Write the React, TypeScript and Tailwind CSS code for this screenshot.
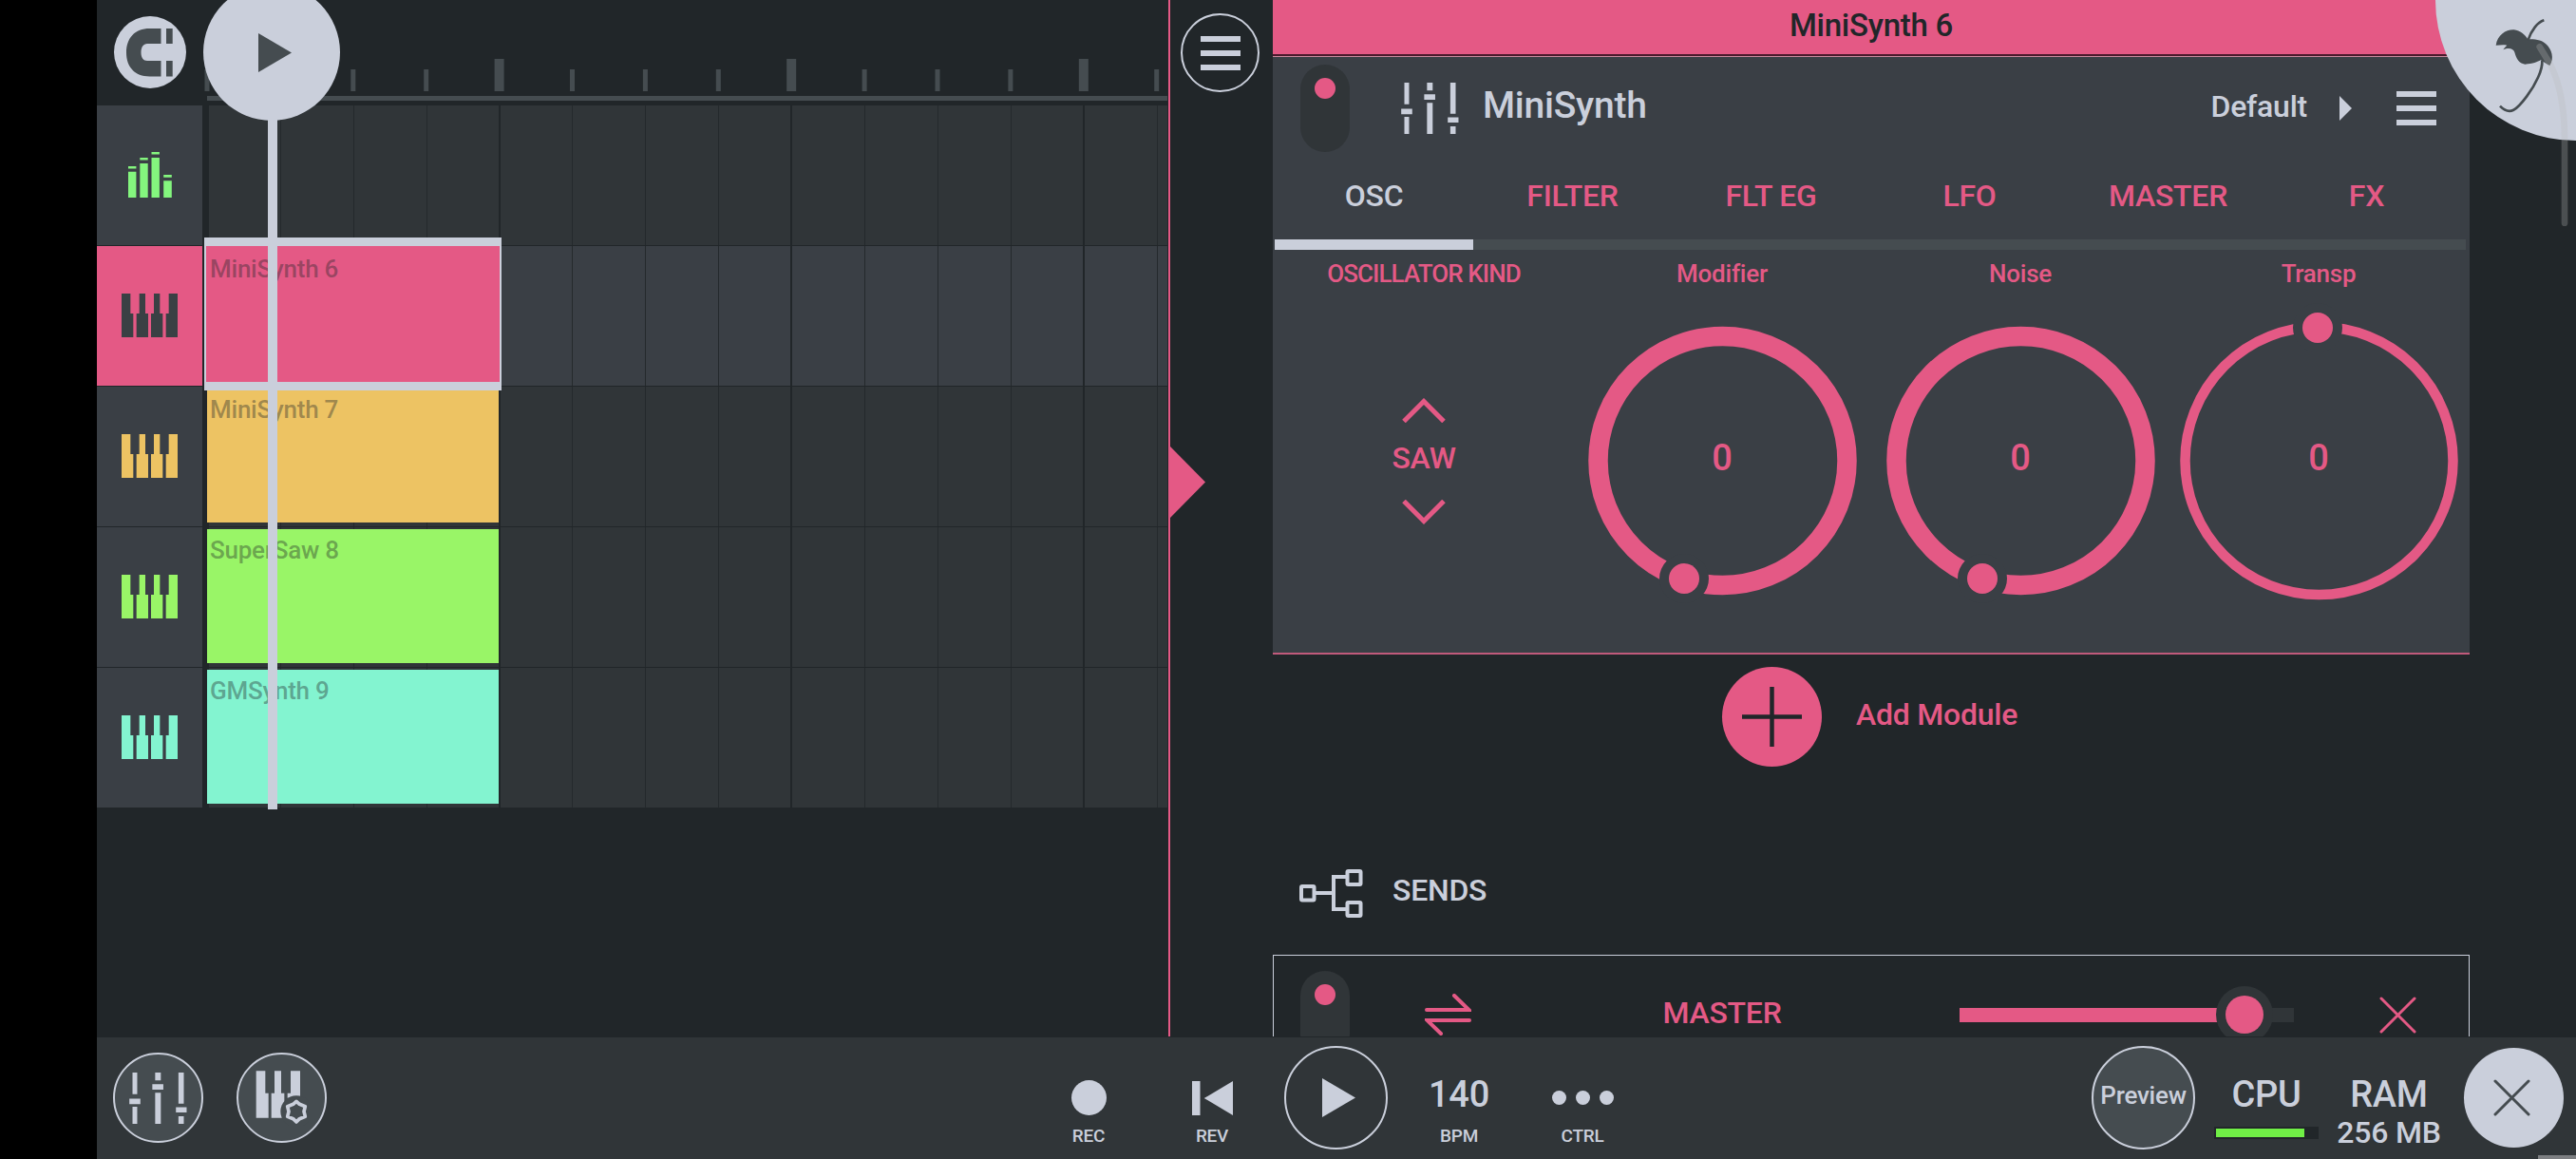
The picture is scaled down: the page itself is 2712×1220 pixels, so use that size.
import type { ReactNode } from "react";

const tracks = [
  { kind: "drums", color: "#84f67e", clip: "" },
  { kind: "keys", color: "#e45985", clip: "MiniSynth 6", selected: true },
  { kind: "keys", color: "#edc363", clip: "MiniSynth 7" },
  { kind: "keys", color: "#99f567", clip: "SuperSaw 8" },
  { kind: "keys", color: "#83f4d0", clip: "GMSynth 9" },
];

const tabs = ["OSC", "FILTER", "FLT EG", "LFO", "MASTER", "FX"];

const knobs = [
  { label: "Modifier", r: 131, width: 20.5, dotX: 110, dotY: 274 },
  { label: "Noise", r: 131, width: 20.5, dotX: 110, dotY: 274 },
  { label: "Transp", r: 141, width: 10.5, dotX: 149, dotY: 10 },
];

const beats = Array.from({ length: 14 }, (_, i) => i);

const KeysIcon = ({ color }: { color: string }) => (
  <svg className="w-[59px] h-[46px]" viewBox="0 0 177 138" fill={color}>
    <path d="M0 0h28v63h9v75H0zM56 0h19v63h9v75H47V63h9zM102 0h19v63h9v75H93V63h9zM149 0h28v138h-37V63h9z" />
  </svg>
);

const DrumsIcon = ({ color }: { color: string }) => (
  <svg className="w-[46px] h-[48px]" viewBox="0 0 46 48" fill={color}>
    <path d="M0 15h8.4v2.6H0zM0 20.7h8.4V48H0zM12.3 6h8.4v2.6h-8.4zM12.3 12h8.4v36h-8.4zM24.5 0h8.4v2.4h-8.4zM24.5 6h8.4v42h-8.4zM37.2 24h8.6v2.7h-8.6zM37.2 30.3h8.6V48h-8.6z" />
  </svg>
);

const MixerIcon = () => (
  <svg className="w-[61px] h-[54px]" viewBox="137 173 183 163" fill="#cacfdb">
    <path d="M147 173h15v69h-15zM137 256h35v17h-35zM147 282h15v54h-15zM219 173h18v25h-18zM210 210h35v17h-35zM219 237h18v99h-18zM293 173h17v99h-17zM285 283h34v17h-34zM293 312h17v24h-17z" />
  </svg>
);

const KeysGearIcon = () => (
  <svg className="w-[56px] h-[58px]" viewBox="541 172 168 174">
    <path
      d="M543 173h29v70h10v78h-39zM601 173h21v70h10v78h-41v-78h10zM652 173h30v85h-40v-15h10z"
      fill="#cacfdb"
    />
    <circle cx="670" cy="301" r="50" fill="#454c50" />
    <path
      d="M670 269l10 9 18 7-4 16 4 16-18 7-10 10-10-10-18-7 4-16-4-16 18-7z"
      fill="none"
      stroke="#cacfdb"
      strokeWidth="11"
      strokeLinejoin="round"
    />
  </svg>
);

const MagnetIcon = () => (
  <svg className="w-[49px] h-[51px]" viewBox="0 0 49 51" fill="#454c50">
    <path d="M36.500 0H24.500C9 0 0 10 0 25.300s9 25.200 24.500 25.200h12V34H22c-4 0-6.500-3-6.500-8.700s2.500-9.300 6.500-9.300h14.500zM42 0h6.700v16H42zM42 34h6.700v16.500H42z" />
  </svg>
);

const Burger = () => (
  <div className="flex flex-col gap-[9px]">
    <div className="w-[42px] h-[6px] bg-[#cacfdb]" />
    <div className="w-[42px] h-[6px] bg-[#cacfdb]" />
    <div className="w-[42px] h-[6px] bg-[#cacfdb]" />
  </div>
);

const PowerToggle = () => (
  <div className="w-[52px] h-[92px] shrink-0 rounded-full bg-[#303538] pt-[14px] flex justify-center">
    <div className="size-[22px] rounded-full bg-[#e45985]" />
  </div>
);

const Ruler = () => (
  <svg className="w-[1016px] h-[111px]" viewBox="213 0 1016 111" fill="#454c50">
    {beats.map((beat) => {
      const big = beat > 0 && beat % 4 === 0;
      const x = 218 + beat * 76.9;
      return (
        <rect
          key={beat}
          x={big ? x - 5 : x - 2.5}
          y={big ? 62 : 73}
          width={big ? 10 : 5}
          height={big ? 34 : 23}
        />
      );
    })}
    <rect x="218" y="101" width="1011" height="5" />
  </svg>
);

const Playlist = () => (
  <section className="relative w-[1128px] shrink-0 overflow-hidden">
    <div className="flex h-[111px]">
      <div className="w-[111px] pt-[17px] flex justify-center items-start">
        <button className="size-[76px] rounded-full bg-[#cacfdb] flex items-center justify-center">
          <MagnetIcon />
        </button>
      </div>
      <Ruler />
    </div>

    {tracks.map((track, index) => (
      <div key={index} className="flex h-[148px]">
        <div
          className="w-[111px] border-b border-[#212629] pb-[2px] flex items-center justify-center"
          style={{ backgroundColor: track.selected ? track.color : "#3a3f45" }}
        >
          {track.kind === "drums" ? (
            <DrumsIcon color={track.color} />
          ) : (
            <KeysIcon color={track.selected ? "#3a4044" : track.color} />
          )}
        </div>
        <div className="relative ml-[5px] w-[1011px]">
          <div
            className={`flex h-full overflow-hidden border-b border-l-2 border-[#212629] ${
              track.selected ? "bg-[#3a3f45]" : "bg-[#303538]"
            }`}
          >
            {beats.map((beat) => (
              <div
                key={beat}
                className={`w-[76.9px] shrink-0 first:w-[75.9px] ${
                  beat % 4 === 3
                    ? "border-r-2 border-[#212629]"
                    : "border-r border-[#24292c]"
                }`}
              />
            ))}
          </div>
          {track.clip && (
            <div
              className={
                track.selected
                  ? "absolute z-10 -left-[3px] -top-[9px] w-[313px] h-[161px] border-x-2 border-y-[9px] border-[#cacfdb] pl-[4px] pt-[8px]"
                  : "absolute left-0 top-[2px] w-[307px] h-[141px] pl-[3px] pt-[6px]"
              }
              style={{ backgroundColor: track.color }}
            >
              <p className="text-[26px] leading-[32px] text-[#212629]/40">
                {track.clip}
              </p>
            </div>
          )}
        </div>
      </div>
    ))}

    {/* playhead */}
    <div className="absolute z-20 left-[180px] top-[100px] w-[10px] h-[752px] bg-[#cacfdb]" />
    <button className="absolute z-20 left-[112px] -top-[17px] size-[144px] rounded-full bg-[#cacfdb]">
      <svg className="ml-[58px] w-[36px] h-[41px]" viewBox="0 0 36 41">
        <path d="M0 0l35 20.500L0 41z" fill="#454c50" />
      </svg>
    </button>
  </section>
);

const Knob = ({ r, width, dotX, dotY }: (typeof knobs)[number]) => (
  <div className="grid place-items-center mt-[32px]">
    <svg
      className="[grid-area:1/1] size-[300px] overflow-visible"
      viewBox="0 0 300 300"
    >
      <circle
        cx="150.500"
        cy="150"
        r={r}
        fill="none"
        stroke="#e45985"
        strokeWidth={width}
      />
      <circle cx={dotX} cy={dotY} r="26" fill="#3a3f45" />
      <circle cx={dotX} cy={dotY} r="16" fill="#e45985" />
    </svg>
    <span className="[grid-area:1/1] mb-[6px] text-[38px] leading-none">0</span>
  </div>
);

const Chevron = ({ d }: { d: string }) => (
  <svg className="w-[46px] h-[26px]" viewBox="0 0 46 26">
    <path d={d} fill="none" stroke="#e45985" strokeWidth="5" />
  </svg>
);

const Module = () => (
  <div className="bg-[#3a3f45] h-[630px] border-t border-b-2 border-t-[#c98a9e] border-b-[#c05a7b]">
    <div className="flex items-center h-[108px] pl-[29px] pr-[35px]">
      <PowerToggle />
      <div className="ml-[54px]">
        <MixerIcon />
      </div>
      <h2 className="ml-[25px] pb-[6px] text-[39px] leading-none">MiniSynth</h2>
      <span className="ml-auto pb-[4px] text-[32px] leading-none">Default</span>
      <svg className="ml-[34px] mr-[47px] w-[13px] h-[26px]" viewBox="0 0 13 26">
        <path d="M0 0l13 13L0 26z" fill="#cacfdb" />
      </svg>
      <Burger />
    </div>

    <div className="ml-[2px] flex w-[1254px]">
      {tabs.map((tab, index) => (
        <div
          key={tab}
          className={`flex-1 h-[95px] border-b-[11px] text-center text-[32px] leading-[76px] ${
            index === 0 ? "border-[#cacfdb]" : "border-[#454c50] text-[#e45985]"
          }`}
        >
          {tab}
        </div>
      ))}
    </div>

    <div className="ml-[2px] flex w-[1256px] pt-[10px] text-[#e45985] text-center">
      <div className="flex-1">
        <p className="text-[26px] leading-[30px] tracking-[-0.035em]">
          OSCILLATOR KIND
        </p>
        <div className="mt-[32px] h-[300px] flex flex-col items-center justify-center">
          <Chevron d="M2 24.500L23 3.500l21 21" />
          <p className="h-[81px] text-[32px] leading-[75px]">SAW</p>
          <Chevron d="M2 1.500l21 21 21-21" />
        </div>
      </div>
      {knobs.map((knob) => (
        <div key={knob.label} className="flex-1">
          <p className="text-[26px] leading-[30px]">{knob.label}</p>
          <Knob {...knob} />
        </div>
      ))}
    </div>
  </div>
);

const SendRow = () => (
  <div className="flex items-center shrink-0 h-[126px] border border-[#cacfdb] pl-[28px]">
    <PowerToggle />
    <svg className="ml-[79px] w-[49px] h-[44px]" viewBox="0 0 49 44">
      <path
        d="M2 17h44.500L31 2M47 28H2.500L17 42"
        fill="none"
        stroke="#e45985"
        strokeWidth="4"
        strokeLinecap="round"
      />
    </svg>
    <span className="w-[514px] pl-[14px] pb-[5px] text-center text-[32px] leading-none text-[#e45985]">
      MASTER
    </span>
    <div className="relative flex w-[352px] h-[15px] bg-[#303538]">
      <div className="w-[300px] bg-[#e45985]" />
      <div className="absolute left-[270px] -top-[23px] size-[60px] rounded-full bg-[#303538] flex items-center justify-center">
        <div className="size-[40px] rounded-full bg-[#e45985]" />
      </div>
    </div>
    <svg className="ml-[90px] w-[39px] h-[39px]" viewBox="0 0 39 39">
      <path
        d="M2 2l35 35M37 2L2 37"
        stroke="#e45985"
        strokeWidth="3"
        strokeLinecap="round"
      />
    </svg>
  </div>
);

const ChannelRack = () => (
  <section className="w-[1260px] h-[1091px] shrink-0 overflow-hidden flex flex-col">
    <h1 className="h-[59px] shrink-0 border-b-2 border-[#4a1a2c] bg-[#e45985] text-center text-[33px] leading-[53px] text-[#212629]">
      MiniSynth 6
    </h1>
    <div className="shrink-0">
      <Module />
    </div>

    <div className="flex items-center shrink-0 h-[132px] pl-[473px] pb-[1px] text-[#e45985]">
      <button className="size-[105px] rounded-full bg-[#e45985] flex items-center justify-center">
        <svg className="size-[63px]" viewBox="0 0 63 63">
          <path d="M31.500 0v63M0 31.500h63" stroke="#212629" strokeWidth="4.500" />
        </svg>
      </button>
      <span className="ml-[36px] pb-[5px] text-[32px] leading-none">
        Add Module
      </span>
    </div>

    <div className="flex items-center shrink-0 mt-[55px] h-[129px] pl-[28px]">
      <svg
        className="w-[67px] h-[51px]"
        viewBox="0 0 67 51"
        fill="none"
        stroke="#cacfdb"
        strokeWidth="4"
      >
        <rect x="2" y="18" width="13.500" height="14.500" rx="1" />
        <rect x="50.500" y="2" width="14" height="14" rx="1" />
        <rect x="50.500" y="35" width="14" height="14" rx="1" />
        <path d="M16 25h20M50 8H36v34h14" />
      </svg>
      <h2 className="ml-[31px] pb-[8px] text-[32px] leading-none">SENDS</h2>
    </div>
    <SendRow />
  </section>
);

const Transport = ({ label, children }: { label: string; children: ReactNode }) => (
  <div className="w-[130px] h-full pt-[45px] flex flex-col items-center">
    <div className="h-[37px] flex items-center">{children}</div>
    <span className="mt-[10px] text-[19px] leading-[24px]">{label}</span>
  </div>
);

const BottomBar = () => (
  <footer className="flex items-center h-[128px] bg-[#303538] pl-[17px] pb-[1px]">
    <button className="size-[95px] rounded-full border-2 border-[#cacfdb] bg-[#454c50] flex items-center justify-center">
      <MixerIcon />
    </button>
    <button className="ml-[35px] size-[95px] rounded-full border-2 border-[#cacfdb] bg-[#454c50] flex items-center justify-center">
      <KeysGearIcon />
    </button>

    <div className="ml-[737px] h-full flex">
      <Transport label="REC">
        <div className="size-[37px] rounded-full bg-[#cacfdb]" />
      </Transport>
      <Transport label="REV">
        <svg className="w-[43px] h-[36px]" viewBox="0 0 43 36" fill="#cacfdb">
          <path d="M0 0h8.500v36H0zM43 0v36L12.700 18z" />
        </svg>
      </Transport>
      <div className="w-[130px] flex items-center justify-center">
        <button className="size-[109px] rounded-full border-2 border-[#cacfdb] flex items-center justify-center">
          <svg className="ml-[7px] w-[35px] h-[41px]" viewBox="0 0 35 41">
            <path d="M0 0l35 20.500L0 41z" fill="#cacfdb" />
          </svg>
        </button>
      </div>
      <Transport label="BPM">
        <span className="pb-[7px] text-[38px] leading-none">140</span>
      </Transport>
      <Transport label="CTRL">
        <div className="flex gap-[10px]">
          <div className="size-[15px] rounded-full bg-[#cacfdb]" />
          <div className="size-[15px] rounded-full bg-[#cacfdb]" />
          <div className="size-[15px] rounded-full bg-[#cacfdb]" />
        </div>
      </Transport>
    </div>

    <button className="ml-[471px] size-[109px] rounded-full border-2 border-[#cacfdb] bg-[#454c50] pb-[5px] text-[26px]">
      Preview
    </button>
    <div className="ml-[20px] w-[110px] h-full pt-[41px] flex flex-col items-center">
      <span className="text-[38px] leading-[38px]">CPU</span>
      <div className="mt-[15px] w-[110px] h-[13px] bg-[#212629] p-[2px]">
        <div className="w-[93px] h-[9px] bg-[#70ef46]" />
      </div>
    </div>
    <div className="w-[148px] h-full pt-[41px] flex flex-col items-center">
      <span className="text-[38px] leading-[38px]">RAM</span>
      <span className="mt-[5px] text-[32px] leading-[32px]">256 MB</span>
    </div>
    <button className="ml-[5px] size-[105px] rounded-full bg-[#cacfdb] flex items-center justify-center">
      <svg className="mr-[5px] w-[39px] h-[39px]" viewBox="0 0 39 39">
        <path
          d="M2 2l35 35M37 2L2 37"
          stroke="#454c50"
          strokeWidth="3"
          strokeLinecap="round"
        />
      </svg>
    </button>
  </footer>
);

// corner button with the palm logo and the edge scroll thumb
const CornerLogo = () => (
  <svg
    className="absolute right-0 top-0 w-[148px] h-[240px]"
    viewBox="852 0 444 720"
  >
    <circle cx="1296" cy="0" r="444" fill="#cacfdb" />
    <path
      d="M1043 143C1048 110 1075 93 1100 94C1120 96 1135 110 1144 124C1165 124 1185 125 1200 138C1220 155 1228 185 1213 207C1203 204 1195 195 1184 190C1175 195 1160 202 1135 203C1115 200 1108 185 1102 165C1100 155 1085 148 1066 157C1070 150 1074 147 1078 143C1065 141 1055 143 1043 143Z"
      fill="#454c50"
    />
    <path
      d="M1144 128C1155 95 1175 70 1195 64M1189 192C1191 220 1170 265 1140 305C1110 345 1088 368 1056 335"
      fill="none"
      stroke="#454c50"
      strokeWidth="8"
    />
    <path
      d="M1181 148L1213 200C1250 270 1260 350 1260 440V704"
      fill="none"
      stroke="#bbbbbb"
      strokeOpacity=".28"
      strokeWidth="20"
      strokeLinecap="round"
    />
  </svg>
);

const App = () => {
  return (
    <div className="relative w-[2712px] h-[1220px] overflow-hidden bg-black pl-[102px] font-['Roboto',sans-serif] font-medium tracking-[-0.015em] text-[#cacfdb]">
      <main className="flex h-[1092px] bg-[#212629]">
        <Playlist />
        <div className="w-[2px] h-[1091px] bg-[#e45985]" />
        <div className="relative w-[108px] shrink-0 pt-[14px] pl-[11px]">
          <button className="size-[83px] rounded-full border-2 border-[#cacfdb] flex items-center justify-center">
            <Burger />
          </button>
          <svg
            className="absolute left-0 top-[470px] w-[37px] h-[75px]"
            viewBox="0 0 37 75"
          >
            <path d="M0 0l37 37.500L0 75z" fill="#e45985" />
          </svg>
        </div>
        <ChannelRack />
      </main>
      <BottomBar />
      <CornerLogo />
      <div className="absolute right-0 bottom-0 w-[40px] h-[4px] bg-[#7d7f82]" />
    </div>
  );
};

export default App;
